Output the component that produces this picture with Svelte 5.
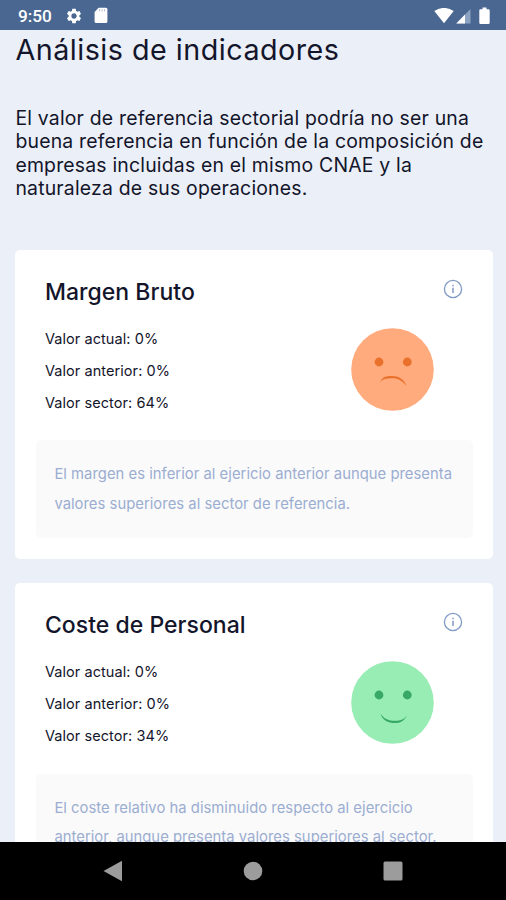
<script lang="ts">
	type Indicator = {
		title: string;
		mood: 'sad' | 'happy';
		current: number;
		previous: number;
		sector: number;
		note: string[];
	};

	const intro = [
		'El valor de referencia sectorial podría no ser una',
		'buena referencia en función de la composición de',
		'empresas incluidas en el mismo CNAE y la',
		'naturaleza de sus operaciones.'
	];

	const indicators: Indicator[] = [
		{
			title: 'Margen Bruto',
			mood: 'sad',
			current: 0,
			previous: 0,
			sector: 64,
			note: [
				'El margen es inferior al ejericio anterior aunque presenta',
				'valores superiores al sector de referencia.'
			]
		},
		{
			title: 'Coste de Personal',
			mood: 'happy',
			current: 0,
			previous: 0,
			sector: 34,
			note: [
				'El coste relativo ha disminuido respecto al ejercicio',
				'anterior, aunque presenta valores superiores al sector.'
			]
		}
	];
</script>

<div class="screen">
	<header class="status">
		<span class="clock">9:50</span>
		<svg class="gear" width="18" height="18" viewBox="0 0 24 24">
			<path
				fill="#fff"
				d="M19.14 12.94c.04-.3.06-.61.06-.94 0-.32-.02-.64-.07-.94l2.03-1.58c.18-.14.23-.41.12-.61l-1.92-3.32c-.12-.22-.37-.29-.59-.22l-2.39.96c-.5-.38-1.03-.7-1.62-.94l-.36-2.54c-.04-.24-.24-.41-.48-.41h-3.84c-.24 0-.43.17-.47.41l-.36 2.54c-.59.24-1.13.57-1.62.94l-2.39-.96c-.22-.08-.47 0-.59.22L2.74 8.87c-.12.21-.08.47.12.61l2.03 1.58c-.05.3-.09.63-.09.94s.02.64.07.94l-2.03 1.58c-.18.14-.23.41-.12.61l1.92 3.32c.12.22.37.29.59.22l2.39-.96c.5.38 1.03.7 1.62.94l.36 2.54c.05.24.24.41.48.41h3.84c.24 0 .44-.17.47-.41l.36-2.54c.59-.24 1.13-.56 1.62-.94l2.39.96c.22.08.47 0 .59-.22l1.92-3.32c.12-.22.07-.47-.12-.61l-2.01-1.58zM12 15.6c-1.98 0-3.6-1.62-3.6-3.6s1.62-3.6 3.6-3.6 3.6 1.62 3.6 3.6-1.62 3.6-3.6 3.6z"
			/>
		</svg>
		<svg class="sd" width="14" height="17" viewBox="0 0 14 17">
			<path fill="#fff" d="M4.600.8h7.300q1.500 0 1.500 1.500v12.200q0 1.500-1.500 1.500H2.100Q.6 16 .6 14.500V5z" />
			<path stroke="#4a6792" stroke-width=".9" opacity=".5" d="M5.500 2.300v2M8 2.300v2M10.500 2.300v2" />
		</svg>
		<span class="spacer"></span>
		<svg width="20" height="16" viewBox="0 0 20 16">
			<path fill="#fff" d="M.3 3.100Q10-3.300 19.700 3.100L10 15.200z" />
		</svg>
		<svg class="signal" width="15" height="16" viewBox="0 0 15 16">
			<path fill="#8ba2c2" d="M14.500 1v14.500H.3z" />
			<path fill="#fff" d="M9 6.600v8.900H.3z" />
		</svg>
		<svg class="battery" width="11" height="18" viewBox="0 0 11 18">
			<path
				fill="#fff"
				d="M3.500.5h4v1.700h2q1.200 0 1.200 1.200v12.400q0 1.200-1.200 1.200h-8Q.3 17 .3 15.800V3.400q0-1.200 1.200-1.200h2z"
			/>
		</svg>
	</header>

	<main>
		<h1>Análisis de indicadores</h1>
		<p class="intro">
			{#each intro as line}
				<span>{line}</span>
			{/each}
		</p>

		{#each indicators as item}
			<section class="card">
				<div class="card-head">
					<h2>{item.title}</h2>
					<svg width="20" height="20" viewBox="0 0 20 20" fill="none" stroke="#819bc6">
						<circle cx="10" cy="10" r="8.600" stroke-width="1.300" />
						<path stroke-width="1.500" d="M10 8.700v5.200M10 5.700v1.600" />
					</svg>
				</div>
				<div class="card-body">
					<ul>
						<li>Valor actual: {item.current}%</li>
						<li>Valor anterior: {item.previous}%</li>
						<li>Valor sector: {item.sector}%</li>
					</ul>
					<svg width="83" height="83" viewBox="0 0 83 83">
						{#if item.mood === 'sad'}
							<circle cx="41.500" cy="41.500" r="41.300" fill="#ffab7d" />
							<circle cx="28" cy="34" r="4.400" fill="#e9712c" />
							<circle cx="56.300" cy="34" r="4.400" fill="#e9712c" />
							<path
								fill="#e9712c"
								d="M29 54.500C31.500 48.500 35 48 41 48C48 48 53 51 55.500 58C51 52 46 50.300 41 50.300C35.500 50.300 31.500 51 29 54.500z"
							/>
						{:else}
							<circle cx="41.500" cy="41.500" r="41.300" fill="#98edb4" />
							<circle cx="28" cy="34" r="4.400" fill="#38a866" />
							<circle cx="56.300" cy="34" r="4.400" fill="#38a866" />
							<path
								fill="#38a866"
								d="M29.500 52.500C33.500 58.500 38 59.700 44 59.700C49 59.700 53 58.500 55.700 54.700C53 60.500 49 62 44 62C37 62 31.500 59.500 29.500 52.500z"
							/>
						{/if}
					</svg>
				</div>
				<p class="note">
					{#each item.note as line}
						<span>{line}</span>
					{/each}
				</p>
			</section>
		{/each}
	</main>

	<nav>
		<svg width="20" height="22" viewBox="0 0 20 22"><path fill="#9c9c9c" d="M.5 11 19 .7v20.600z" /></svg>
		<svg width="20" height="20" viewBox="0 0 20 20"><circle cx="10" cy="10" r="9.300" fill="#9c9c9c" /></svg>
		<svg width="20" height="20" viewBox="0 0 20 20"
			><rect x=".5" y=".5" width="19" height="19" rx="1.500" fill="#9c9c9c" /></svg
		>
	</nav>
</div>

<style>
	:global(body) {
		margin: 0;
	}

	.screen {
		display: flex;
		flex-direction: column;
		height: 900px;
		overflow: hidden;
		background: #ebeff7;
		color: #13152b;
		font-family: Inter, 'Liberation Sans', sans-serif;
	}

	.status {
		flex: none;
		display: flex;
		align-items: center;
		box-sizing: border-box;
		height: 29.5px;
		padding: 2px 16.5px 0 18px;
		background: #4a6792;
		color: #fff;
	}

	.clock {
		width: 47px;
		font: 500 17.2px Roboto, sans-serif;
	}

	.gear {
		margin-right: 11px;
	}

	.spacer {
		flex: 1;
	}

	.signal {
		margin: 0 8px 0 2px;
	}

	main {
		flex: 1;
		min-height: 0;
		overflow: hidden;
		padding: 0 13.5px 0 15.4px;
	}

	h1,
	h2,
	p,
	ul {
		margin: 0;
		padding: 0;
		white-space: nowrap;
	}

	h1 {
		margin-top: 2px;
		font-size: 28.7px;
		font-weight: 400;
		line-height: 36px;
		letter-spacing: 0.5px;
	}

	.intro {
		margin: 39px 0 49.2px;
		font-size: 19.4px;
		line-height: 23.5px;
		letter-spacing: 0.2px;
	}

	.intro span,
	.note span {
		display: block;
	}

	.card {
		box-sizing: border-box;
		height: 309px;
		margin-bottom: 24.5px;
		padding: 29px 20px 20px 20.5px;
		border-radius: 5px;
		background: #fff;
	}

	.card-head {
		display: flex;
		justify-content: space-between;
		padding: 0 10px 0 9px;
	}

	h2 {
		font-size: 23px;
		font-weight: 500;
		line-height: 27px;
		letter-spacing: 0.03px;
	}

	.card-body {
		display: flex;
		justify-content: space-between;
		margin: 17px 39px 0 9px;
	}

	.card-body svg {
		margin-top: 5px;
	}

	ul {
		list-style: none;
		font-size: 14.5px;
		line-height: 32px;
		letter-spacing: 0.07px;
	}

	.note {
		height: 98px;
		margin-top: 21.5px;
		box-sizing: border-box;
		padding: 20px 18.5px;
		border-radius: 5px;
		background: #fafafa;
		color: #9badd1;
		font-size: 14.8px;
		line-height: 29.4px;
		letter-spacing: 0.03px;
	}

	nav {
		flex: none;
		display: flex;
		align-items: center;
		justify-content: space-between;
		box-sizing: border-box;
		height: 58px;
		padding: 0 103px 0 102.5px;
		background: #000;
	}
</style>
